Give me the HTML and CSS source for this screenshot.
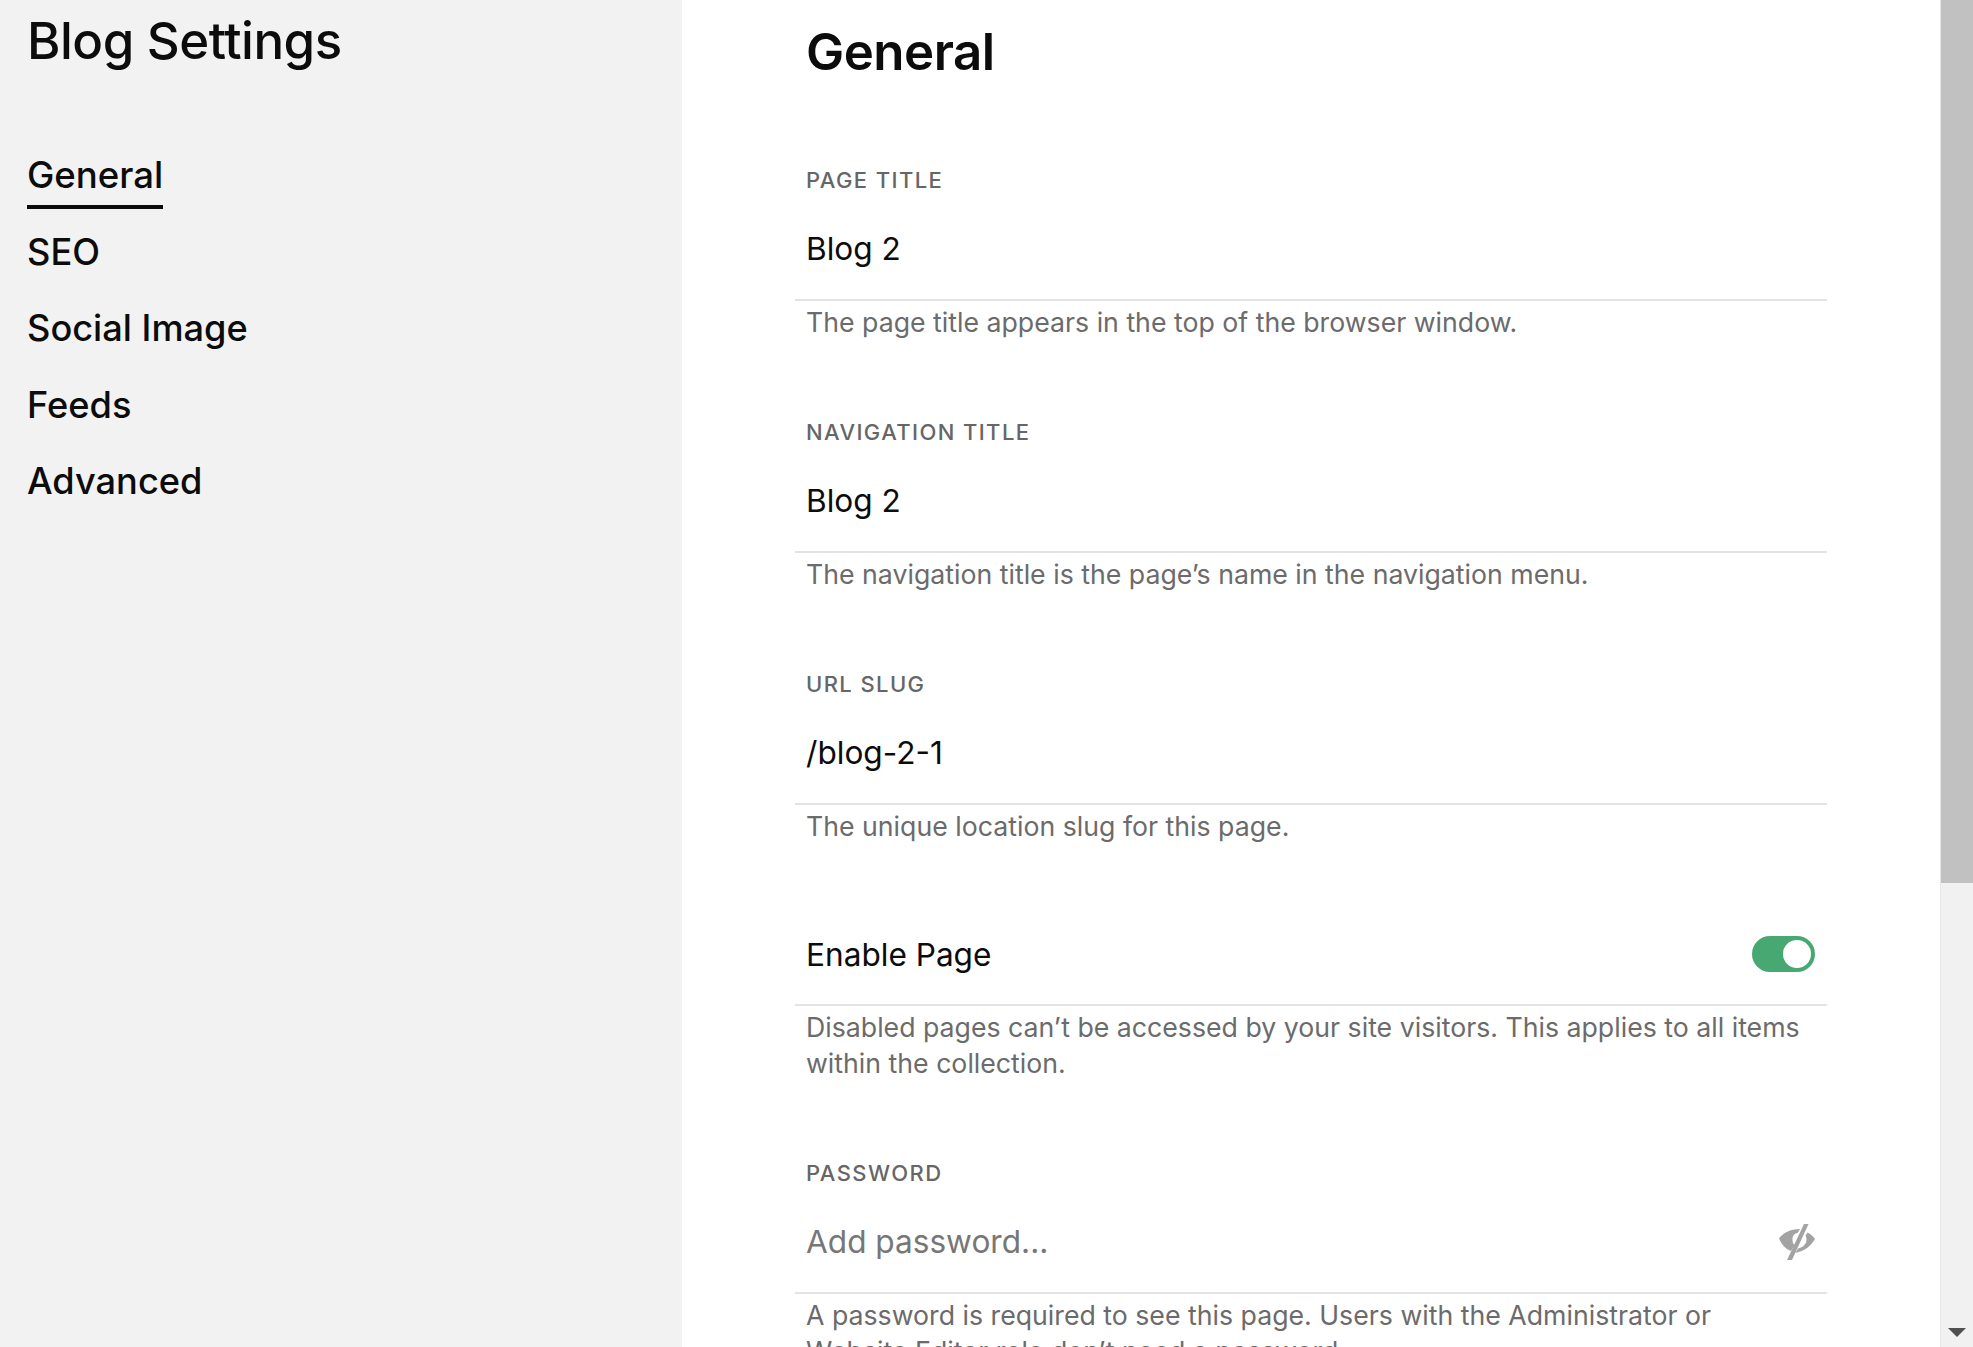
FILE: index.html
```html
<!DOCTYPE html>
<html lang="en">
<head>
    <meta charset="UTF-8">
    <title>Blog Settings</title>
    <link rel="stylesheet" href="styles.css">
</head>
<body>
    <aside class="sidebar">
        <h1 class="sidebar-title">Blog Settings</h1>
        <nav class="nav">
            <a class="nav-link active">General</a>
            <a class="nav-link">SEO</a>
            <a class="nav-link">Social Image</a>
            <a class="nav-link">Feeds</a>
            <a class="nav-link">Advanced</a>
        </nav>
    </aside>

    <main class="content">
        <h2 class="content-title">General</h2>

        <section class="field">
            <div class="field-label">PAGE TITLE</div>
            <div class="field-row"><span class="field-value">Blog 2</span></div>
            <p class="field-hint">The page title appears in the top of the browser window.</p>
        </section>

        <section class="field">
            <div class="field-label">NAVIGATION TITLE</div>
            <div class="field-row"><span class="field-value">Blog 2</span></div>
            <p class="field-hint">The navigation title is the page’s name in the navigation menu.</p>
        </section>

        <section class="field">
            <div class="field-label">URL SLUG</div>
            <div class="field-row"><span class="field-value">/blog-2-1</span></div>
            <p class="field-hint">The unique location slug for this page.</p>
        </section>

        <section class="field field-toggle">
            <div class="field-row">
                <span class="field-value">Enable Page</span>
                <span class="toggle"><span class="toggle-knob"></span></span>
            </div>
            <p class="field-hint">Disabled pages can’t be accessed by your site visitors. This applies to all items within the collection.</p>
        </section>

        <section class="field">
            <div class="field-label">PASSWORD</div>
            <div class="field-row">
                <span class="field-value placeholder">Add password...</span>
                <svg class="eye-icon" width="36" height="36" viewBox="0 0 36 36">
                    <path fill="#a3a3a3" d="M0 14.500C4 9 11 5 21 5l-2.500 4C15 9.500 13.500 12 13.500 15.500c0 2.500 .5 4.500 2 5.500l-3.500 6C6 25 2.500 20 0 14.500z"/>
                    <path fill="#a3a3a3" d="M28.500 8.500c3 1.500 5.500 3.500 7.500 6.500-4 7-10.500 12-19.500 14l2.500-4.500c5-1 8.500-4.500 8.500-9 0-1.500-.5-3-1-4z"/>
                    <path fill="#a3a3a3" d="M25 0h4.500L13 36H8z"/>
                </svg>
            </div>
            <p class="field-hint">A password is required to see this page. Users with the Administrator or Website Editor role don’t need a password.</p>
        </section>
    </main>

    <div class="scrollbar">
        <div class="scrollbar-thumb"></div>
        <div class="scrollbar-track"></div>
        <div class="scrollbar-arrow"></div>
    </div>
</body>
</html>
```

FILE: styles.css
```css
html, body {
    height: 100%;
}

body {
    margin: 0;
    display: flex;
    height: 100vh;
    overflow: hidden;
    background-color: #fff;
    color: #0c0c0c;
    font-family: Inter, "Liberation Sans", sans-serif;
}

/* Sidebar */
.sidebar {
    width: 682px;
    flex-shrink: 0;
    box-sizing: border-box;
    padding: 10px 27px 0;
    background-color: #f2f2f2;
}

.sidebar-title {
    margin: 0;
    font-size: 51px;
    line-height: 62px;
    font-weight: 500;
    letter-spacing: -0.5px;
}

.nav {
    display: flex;
    flex-direction: column;
    align-items: flex-start;
    margin-top: 76px;
}

.nav-link {
    height: 76.500px;
    box-sizing: border-box;
    font-size: 36.200px;
    line-height: 48px;
    padding-top: 3px;
    font-weight: 500;
}

.nav-link.active {
    height: 61px;
    margin-bottom: 15.500px;
    font-size: 36.600px;
    border-bottom: 4px solid #0c0c0c;
}

/* Main column */
.content {
    flex: 1;
    min-width: 0;
    box-sizing: border-box;
    padding: 20px 113px 0;
}

.content-title {
    margin: 0 0 64px 11px;
    font-size: 51px;
    line-height: 64px;
    font-weight: 600;
    letter-spacing: -0.5px;
}

.field {
    height: 252px;
    box-sizing: border-box;
    padding-top: 18px;
}

.field-label {
    padding: 0 11px;
    font-size: 22px;
    line-height: 28px;
    font-weight: 500;
    letter-spacing: 1.400px;
    color: #666;
}

.field-row {
    display: flex;
    align-items: center;
    justify-content: space-between;
    height: 103px;
    margin-top: 4px;
    box-sizing: border-box;
    padding: 0 12px 0 11px;
    border-bottom: 2px solid #e3e3e3;
}

.field-value {
    font-size: 31.600px;
}

.placeholder {
    color: #777;
}

.field-hint {
    margin: 3px 0 0;
    padding: 0 14px 0 11px;
    font-size: 26.700px;
    line-height: 36px;
    color: #6b6b6b;
}

.field-toggle {
    height: 237px;
    padding-top: 0;
}

.field-toggle .field-row {
    height: 102px;
    margin-top: 0;
}

/* Toggle */
.toggle {
    display: flex;
    align-items: center;
    justify-content: flex-end;
    width: 63px;
    height: 36px;
    box-sizing: border-box;
    padding-right: 4px;
    border-radius: 18px;
    background-color: #48a871;
}

.toggle-knob {
    width: 28px;
    height: 28px;
    border-radius: 50%;
    background-color: #fff;
}

/* Scrollbar */
.scrollbar {
    width: 33px;
    flex-shrink: 0;
    box-sizing: border-box;
    display: flex;
    flex-direction: column;
    border-left: 1px solid #e8e8e8;
    background-color: #f1f1f1;
}

.scrollbar-thumb {
    height: 883px;
    background-color: #c1c1c1;
}

.scrollbar-track {
    flex: 1;
}

.scrollbar-arrow {
    width: 0;
    height: 0;
    margin: 0 auto 10px;
    border-left: 9px solid transparent;
    border-right: 9px solid transparent;
    border-top: 9px solid #505050;
}
```
